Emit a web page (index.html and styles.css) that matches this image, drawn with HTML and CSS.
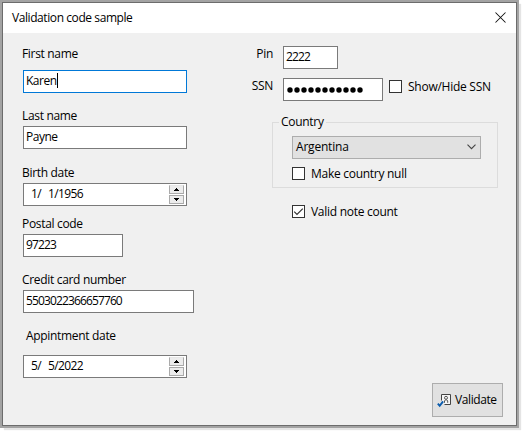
FILE: index.html
```
<!DOCTYPE html>
<html lang="en">
<head>
<meta charset="utf-8">
<title>Validation code sample</title>
<link rel="stylesheet" href="styles.css">
</head>
<body>
<main class="window">
  <header class="titlebar">
    <span class="title">Validation code sample</span>
    <svg class="close" width="11" height="11" viewBox="0 0 11 11"><path d="M.5.5l10 10M10.5.5l-10 10" fill="none" stroke="#111" stroke-width="1.05"/></svg>
  </header>
  <div class="content">
    <section class="left">
      <div class="field first"><span class="label">First name</span><div class="box focused"><span class="word">Karen</span><i class="caret"></i></div></div>
      <div class="field last"><span class="label">Last name</span><div class="box"><span class="word">Payne</span></div></div>
      <div class="field birth"><span class="label">Birth date</span>
        <div class="box date"><span class="month">1/</span><span class="day">1/1956</span>
          <span class="spin"><span class="step"><svg width="5" height="3" viewBox="0 0 5 3"><path d="M2 0h1v1h1v1h1v1H0V2h1V1h1z"/></svg></span><span class="step"><svg width="5" height="3" viewBox="0 0 5 3"><path d="M0 0h5v1H4v1H3v1H2V2H1V1H0z"/></svg></span></span>
        </div>
      </div>
      <div class="field postal"><span class="label">Postal code</span><div class="box"><span class="num">97223</span></div></div>
      <div class="field credit"><span class="label">Credit card number</span><div class="box"><span class="num">5503022366657760</span></div></div>
      <div class="field appt"><span class="label">Appintment date</span>
        <div class="box date"><span class="month">5/</span><span class="day">5/2022</span>
          <span class="spin"><span class="step"><svg width="5" height="3" viewBox="0 0 5 3"><path d="M2 0h1v1h1v1h1v1H0V2h1V1h1z"/></svg></span><span class="step"><svg width="5" height="3" viewBox="0 0 5 3"><path d="M0 0h5v1H4v1H3v1H2V2H1V1H0z"/></svg></span></span>
        </div>
      </div>
    </section>
    <section class="right">
      <div class="row pin"><span class="label">Pin</span><div class="box"><span class="num">2222</span></div></div>
      <div class="row ssn"><span class="label">SSN</span>
        <div class="box"><svg width="77" height="6" viewBox="0 0 77 6"><path d="M3 3h70.1" fill="none" stroke="#000" stroke-width="5.4" stroke-linecap="round" stroke-dasharray="0 7"/></svg></div>
        <div class="check"><i class="tick"></i><span class="show">Show/Hide SSN</span></div>
      </div>
      <fieldset class="group">
        <legend>Country</legend>
        <div class="select"><span>Argentina</span><svg width="9" height="6" viewBox="0 0 9 6"><path d="M.5.7l4 4 4-4" fill="none" stroke="#444" stroke-width="1.1"/></svg></div>
        <div class="check null"><i class="tick"></i><span>Make country null</span></div>
      </fieldset>
      <div class="check valid"><i class="tick"><svg width="11" height="11" viewBox="0 0 11 11"><path d="M1.2 5.6L4 8.4l5.8-5.8" fill="none" stroke="#333" stroke-width="1.2"/></svg></i><span>Valid note count</span></div>
      <div class="button">
        <svg width="16" height="16" viewBox="0 0 16 16"><path d="M4.5 8.5v-6h9v10h-6" fill="#f6f6f6" stroke="#444"/><circle cx="9" cy="5.8" r="1.5" fill="none" stroke="#555"/><path d="M7.5 10.8V9l1-1.2h1.2l1 1.2v1.8" fill="none" stroke="#555"/><path d="M.8 11.7l1.9 2.1 3.4-4.4" fill="none" stroke="#0b5cad" stroke-width="1.9"/></svg>
        <span>Validate</span>
      </div>
    </section>
  </div>
</main>
</body>
</html>
```
FILE: styles.css
```
* { box-sizing: border-box; }
body {
  margin: 0; width: 524px; height: 433px; overflow: hidden; background: #fff;
  font: 12px/16px "Open Sans", "Noto Sans", sans-serif; color: #000;
}
.window {
  width: 515px; height: 424px; margin: 2px 0 0 2px;
  background: #f0f0f0; border: 1px solid #6c6c6c;
  box-shadow: 0 0 0 2px #a3a3a3, 3px 3px 1px 1px #e4e4e4;
}
.titlebar { height: 30px; background: #fff; display: flex; justify-content: space-between; padding: 7px 10px 0 9px; }
.title { letter-spacing: -.42px; }
.close { margin-top: 2px; }
.content { display: flex; height: 392px; }
.left { width: 229px; padding-left: 20px; }
.label { display: block; height: 16px; margin-left: -1px; letter-spacing: -.32px; white-space: nowrap; }
.box {
  width: 164px; height: 23px; background: #fff; border: 1px solid #7a7a7a;
  display: flex; padding: 2px 0 0 2px; white-space: nowrap;
}
.focused { border-color: #0078d7; }
.word { letter-spacing: -.5px; }
.num { letter-spacing: -.87px; }
.caret { width: 1px; height: 15px; background: #000; }
.first { padding-top: 13px; }
.first .label { margin-bottom: 8px; }
.last { padding-top: 15px; }
.last .label, .birth .label, .postal .label, .credit .label { margin-bottom: 2px; }
.birth { padding-top: 16px; }
.postal { padding-top: 10px; }
.postal .box { width: 100px; }
.credit { padding-top: 15px; }
.credit .box { width: 171px; }
.appt { padding-top: 15px; }
.appt .label { margin: 0 0 11px 3px; }
.date { padding: 2px 2px 0 7px; letter-spacing: -.6px; }
.month { width: 17px; }
.spin { margin: -1px 0 0 auto; display: grid; gap: 1px; align-content: start; }
.step { width: 15px; height: 9px; background: #ececec; border: 1px solid #aaa; display: flex; align-items: center; justify-content: center; }
.step:first-child { border-top-color: #e6e6e6; }
.right { width: 284px; display: flex; flex-direction: column; padding-top: 13px; }
.row { display: flex; }
.row .label { width: 51px; margin: 0; text-align: right; padding-right: 10px; }
.pin .box { width: 55px; }
.ssn { margin-top: 9px; }
.ssn .box { width: 100px; padding: 8px 0 0 3px; }
.check { display: flex; gap: 6px; height: 13px; letter-spacing: -.28px; white-space: nowrap; }
.check span { margin-top: -1px; }
.ssn .check { margin: 2px 0 0 6px; }
.show { letter-spacing: -.26px; }
.tick { width: 13px; height: 13px; flex: none; background: #fff; border: 1px solid #333; display: flex; }
.group { margin: 13px 0 0 40px; width: 226px; height: 74px; padding: 0 0 0 19px; border: 1px solid #dcdcdc; }
.group legend { padding: 0 2px; margin-left: -13px; letter-spacing: -.3px; }
.select { width: 189px; height: 23px; margin-top: 6px; padding: 0 4px 1px 3px; background: #e1e1e1; border: 1px solid #adadad; display: flex; align-items: center; justify-content: space-between; letter-spacing: -.2px; }
.null { margin-top: 8px; }
.valid { margin: 17px 0 0 60px; }
.button {
  width: 71px; height: 34px; margin: 165px 0 0 200px; background: #e1e1e1; border: 1px solid #adadad;
  display: flex; align-items: center; gap: 2px; padding-left: 4px; letter-spacing: -.4px;
}
```
